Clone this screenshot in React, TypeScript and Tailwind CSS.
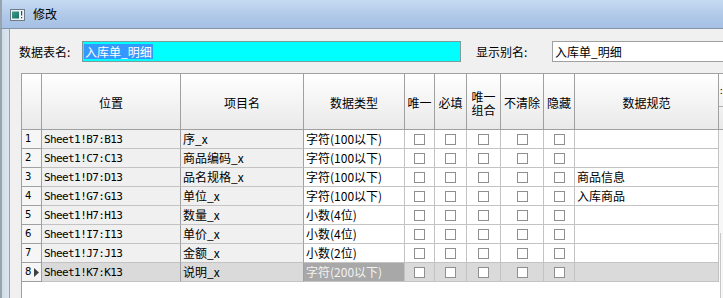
import React from 'react';

type Row = { pos: string; name: string; type: string; spec: string };

const rows: Row[] = [
  { pos: 'Sheet1!B7:B13', name: '序_x', type: '字符(100以下)', spec: '' },
  { pos: 'Sheet1!C7:C13', name: '商品编码_x', type: '字符(100以下)', spec: '' },
  { pos: 'Sheet1!D7:D13', name: '品名规格_x', type: '字符(100以下)', spec: '商品信息' },
  { pos: 'Sheet1!G7:G13', name: '单位_x', type: '字符(100以下)', spec: '入库商品' },
  { pos: 'Sheet1!H7:H13', name: '数量_x', type: '小数(4位)', spec: '' },
  { pos: 'Sheet1!I7:I13', name: '单价_x', type: '小数(4位)', spec: '' },
  { pos: 'Sheet1!J7:J13', name: '金额_x', type: '小数(2位)', spec: '' },
  { pos: 'Sheet1!K7:K13', name: '说明_x', type: '字符(200以下)', spec: '' },
];

const checkCols = ['w-[30px]', 'w-[32px]', 'w-[34px]', 'w-[43px]', 'w-[31px]'];

function Box() {
  return <div className="w-[11px] h-[11px] border border-[#8f8f8f] bg-white" />;
}

function TitleIcon() {
  return (
    <svg width="15" height="12" viewBox="0 0 15 12">
      <defs>
        <linearGradient id="tg" x1="0" y1="0" x2="1" y2="1">
          <stop offset="0" stopColor="#3f9c8c" />
          <stop offset="1" stopColor="#1c6f66" />
        </linearGradient>
      </defs>
      <rect x="0.5" y="0.5" width="14" height="11" fill="#eef2f4" stroke="#6d7b88" />
      <rect x="2" y="2.5" width="7" height="7" fill="url(#tg)" />
      <rect x="11" y="2" width="1.2" height="4.5" fill="#3b4a55" />
      <rect x="11" y="8" width="1.2" height="1.3" fill="#3b4a55" />
    </svg>
  );
}

export default function App() {
  return (
    <div className="w-[723px] h-[298px] overflow-hidden flex flex-col bg-[#f0f0f0] text-black font-['Noto_Sans_CJK_SC',sans-serif] text-[12px] leading-none">
      {/* title bar */}
      <div className="h-[29px] shrink-0 flex items-center border-b border-[#8596ab] border-l-2 border-l-[#97a3af] bg-[linear-gradient(to_bottom,#c6daf2,#afc8e8_60%,#a5c0e4)]">
        <div className="ml-[8px] mt-[1px] flex items-center">
          <TitleIcon />
        </div>
        <span className="ml-[8px] text-[12px]">修改</span>
      </div>

      <div className="flex flex-1 min-h-0">
        {/* left window frame */}
        <div className="w-[9px] shrink-0 border-l-2 border-[#97a3af] bg-[linear-gradient(to_right,#d0dce8,#dbe5ef)]" />

        <div className="flex-1 min-w-0 flex flex-col border-l border-[#98a4b2] bg-[#f0f0f0] pt-[12px]">
          {/* form row */}
          <div className="flex items-center h-[21px] pl-[9px] shrink-0">
            <span className="w-[63px] shrink-0">数据表名:</span>
            <div className="w-[379px] h-[21px] shrink-0 border border-[#7a9c9c] bg-[#00ffff] flex items-center pl-[1px]">
              <span className="bg-[#3399ff] text-white px-[1px] h-[15px] flex items-center">入库单_明细</span>
            </div>
            <span className="ml-[15px] w-[76px] shrink-0">显示别名:</span>
            <div className="w-[200px] h-[21px] shrink-0 border border-[#a0a0a0] bg-white flex items-center pl-[2px]">
              入库单_明细
            </div>
          </div>

          {/* table */}
          <div className="mt-[11px] ml-[11px] flex-1 min-h-0 border-l border-t border-[#a0a0a0] bg-white overflow-hidden flex flex-col">
            {/* header */}
            <div className="flex h-[56px] shrink-0 border-b border-[#a0a0a0] bg-[linear-gradient(to_bottom,#ffffff,#f4f4f4_50%,#e9e9e9)]">
              <div className="w-[20px] shrink-0 border-r border-[#a0a0a0]" />
              <div className="w-[139px] shrink-0 border-r border-[#a0a0a0] flex items-center justify-center pt-[2px]">位置</div>
              <div className="w-[123px] shrink-0 border-r border-[#a0a0a0] flex items-center justify-center pt-[2px]">项目名</div>
              <div className="w-[101px] shrink-0 border-r border-[#a0a0a0] flex items-center justify-center pt-[2px]">数据类型</div>
              <div className="w-[30px] shrink-0 border-r border-[#a0a0a0] flex items-center justify-center pt-[2px]">唯一</div>
              <div className="w-[32px] shrink-0 border-r border-[#a0a0a0] flex items-center justify-center pt-[2px]">必填</div>
              <div className="w-[34px] shrink-0 border-r border-[#a0a0a0] flex items-center justify-center pt-[2px]">
                <span className="block w-[25px] text-center leading-[13px] break-all">唯一组合</span>
              </div>
              <div className="w-[43px] shrink-0 border-r border-[#a0a0a0] flex items-center justify-center pt-[2px]">不清除</div>
              <div className="w-[31px] shrink-0 border-r border-[#a0a0a0] flex items-center justify-center pt-[2px]">隐藏</div>
              <div className="w-[144px] shrink-0 border-r border-[#a0a0a0] flex items-center justify-center pt-[2px]">数据规范</div>
              <div className="flex-1 flex flex-col">
                <div className="h-[33px] border-b border-[#b0b0b0] pl-[1px] pt-[12px] text-[9px]">:</div>
              </div>
            </div>

            {rows.map((r, i) => {
              const sel = i === rows.length - 1;
              const ro = sel ? 'bg-[#dadada]' : 'bg-[#f0f0f0]';
              const wt = sel ? 'bg-[#dadada]' : 'bg-white';
              return (
                <div key={i} className="flex h-[19px] shrink-0">
                  <div className="w-[20px] shrink-0 border-r border-b border-[#a0a0a0] bg-[#f6f6f6] flex items-center pl-[3px] text-[10px] font-['DejaVu_Sans',sans-serif]">
                    <span>{i + 1}</span>
                    {sel && (
                      <svg width="5" height="9" viewBox="0 0 5 9" className="ml-[3px]">
                        <path d="M0 0 L5 4.5 L0 9 Z" fill="#404040" />
                      </svg>
                    )}
                  </div>
                  <div className={`w-[139px] shrink-0 border-r border-b border-r-[#a0a0a0] border-b-[#c3c3c3] ${ro} flex items-center pl-[2px] font-['DejaVu_Sans_Mono',monospace] text-[11px] tracking-[-0.6px] whitespace-nowrap`}>
                    {r.pos}
                  </div>
                  <div className={`w-[123px] shrink-0 border-r border-b border-r-[#a0a0a0] border-b-[#c3c3c3] ${ro} flex items-center pl-[2px] whitespace-nowrap`}>
                    {r.name}
                  </div>
                  <div className={`w-[101px] shrink-0 border-r border-b border-r-[#c3c3c3] border-b-[#c3c3c3] ${sel ? 'bg-[#a8a8a8] text-[#f2f2f2]' : 'bg-white'} flex items-center pl-[2px] whitespace-nowrap`}>
                    {r.type}
                  </div>
                  {checkCols.map((w, j) => (
                    <div key={j} className={`${w} shrink-0 border-r border-b border-[#c3c3c3] ${wt} flex items-center justify-center`}>
                      <Box />
                    </div>
                  ))}
                  <div className={`w-[144px] shrink-0 border-r border-b border-[#c3c3c3] ${wt} flex items-center pl-[2px] whitespace-nowrap`}>
                    {r.spec}
                  </div>
                  <div className="flex-1 bg-[#f7f7f7]" />
                </div>
              );
            })}
            <div className="flex-1 flex">
              <div className="w-[698px] shrink-0" />
              <div className="flex-1 bg-[#f7f7f7] border-l border-[#c8c8c8] mt-[-49px]" />
            </div>
          </div>
        </div>
      </div>
    </div>
  );
}
